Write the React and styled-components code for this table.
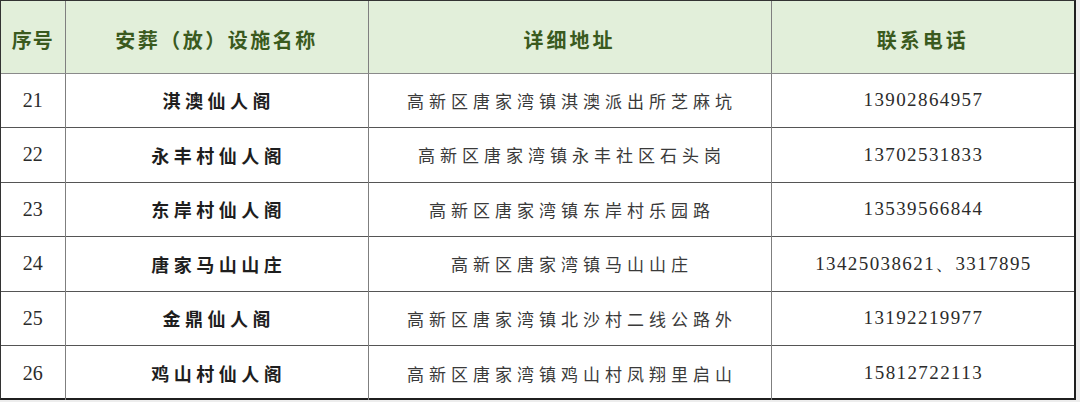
import styled, { createGlobalStyle } from 'styled-components';

const GlobalStyle = createGlobalStyle`
  html,
  body {
    margin: 0;
    padding: 0;
    background: #ededed;
  }
`;

const rows = [
  { no: 21, name: '淇澳仙人阁', address: '高新区唐家湾镇淇澳派出所芝麻坑', phone: '13902864957' },
  { no: 22, name: '永丰村仙人阁', address: '高新区唐家湾镇永丰社区石头岗', phone: '13702531833' },
  { no: 23, name: '东岸村仙人阁', address: '高新区唐家湾镇东岸村乐园路', phone: '13539566844' },
  { no: 24, name: '唐家马山山庄', address: '高新区唐家湾镇马山山庄', phone: '13425038621、3317895' },
  { no: 25, name: '金鼎仙人阁', address: '高新区唐家湾镇北沙村二线公路外', phone: '13192219977' },
  { no: 26, name: '鸡山村仙人阁', address: '高新区唐家湾镇鸡山村凤翔里启山', phone: '15812722113' },
];

const Wrapper = styled.div`
  width: 1076px;
  height: 400px;
  background: #ffffff;
  box-sizing: border-box;
  border-top: 1px solid #333;
  border-left: 1px solid #333;
  border-right: 2px solid #1f1f1f;
  border-bottom: 2px solid #1f1f1f;
`;

const Table = styled.table`
  width: 100%;
  height: 100%;
  table-layout: fixed;
  border-collapse: collapse;
`;

const HeadRow = styled.tr`
  height: 72px;
  background: #e2efda;
`;

const BodyRow = styled.tr`
  height: 54.5px;
`;

const HeadCell = styled.th`
  padding: 5px 0 0;
  text-align: center;
  font-family: 'Noto Sans CJK SC', 'Noto Sans', sans-serif;
  font-size: 20px;
  font-weight: 700;
  letter-spacing: ${({ $spacing }) => $spacing || '2.5px'};
  color: #3a5a1e;
  border-bottom: 1px solid #8a8a8a;
  border-left: ${({ $first }) => ($first ? 'none' : '1.5px solid #7f7f7f')};
`;

const Cell = styled.td`
  padding: 0;
  text-align: center;
  border-top: 1px solid #555;
  border-left: ${({ $first }) => ($first ? 'none' : '1.5px solid #7f7f7f')};
  white-space: nowrap;
`;

const Number = styled.span`
  font-family: 'Liberation Serif', 'Times New Roman', serif;
  font-size: ${({ $size }) => $size || '19px'};
  letter-spacing: ${({ $spacing }) => $spacing || '1.4px'};
  color: #2b2b2b;
`;

const Name = styled.span`
  font-family: 'Noto Sans CJK SC', 'Noto Sans', sans-serif;
  font-size: 18px;
  font-weight: 700;
  letter-spacing: 4.5px;
  margin-right: -4.5px;
  color: #1e1e1e;
`;

const Address = styled.span`
  font-family: 'Noto Sans CJK SC', 'Noto Sans', sans-serif;
  font-size: 17px;
  font-weight: 400;
  letter-spacing: 5px;
  margin-right: -5px;
  color: #3a3a3a;
`;

const Phone = styled(Number)`
  margin-right: -1.4px;
`;

const App = () => (
  <>
    <GlobalStyle />
    <Wrapper>
      <Table>
        <colgroup>
          <col style={{ width: 64 }} />
          <col style={{ width: 303 }} />
          <col style={{ width: 403 }} />
          <col />
        </colgroup>
        <thead>
          <HeadRow>
            <HeadCell $first $spacing="1px">序号</HeadCell>
            <HeadCell>安葬（放）设施名称</HeadCell>
            <HeadCell $spacing="3px">详细地址</HeadCell>
            <HeadCell $spacing="3px">联系电话</HeadCell>
          </HeadRow>
        </thead>
        <tbody>
          {rows.map(({ no, name, address, phone }) => (
            <BodyRow key={no}>
              <Cell $first>
                <Number $size="20px" $spacing="0">{no}</Number>
              </Cell>
              <Cell>
                <Name>{name}</Name>
              </Cell>
              <Cell>
                <Address>{address}</Address>
              </Cell>
              <Cell>
                <Phone>{phone}</Phone>
              </Cell>
            </BodyRow>
          ))}
        </tbody>
      </Table>
    </Wrapper>
  </>
);

export default App;
